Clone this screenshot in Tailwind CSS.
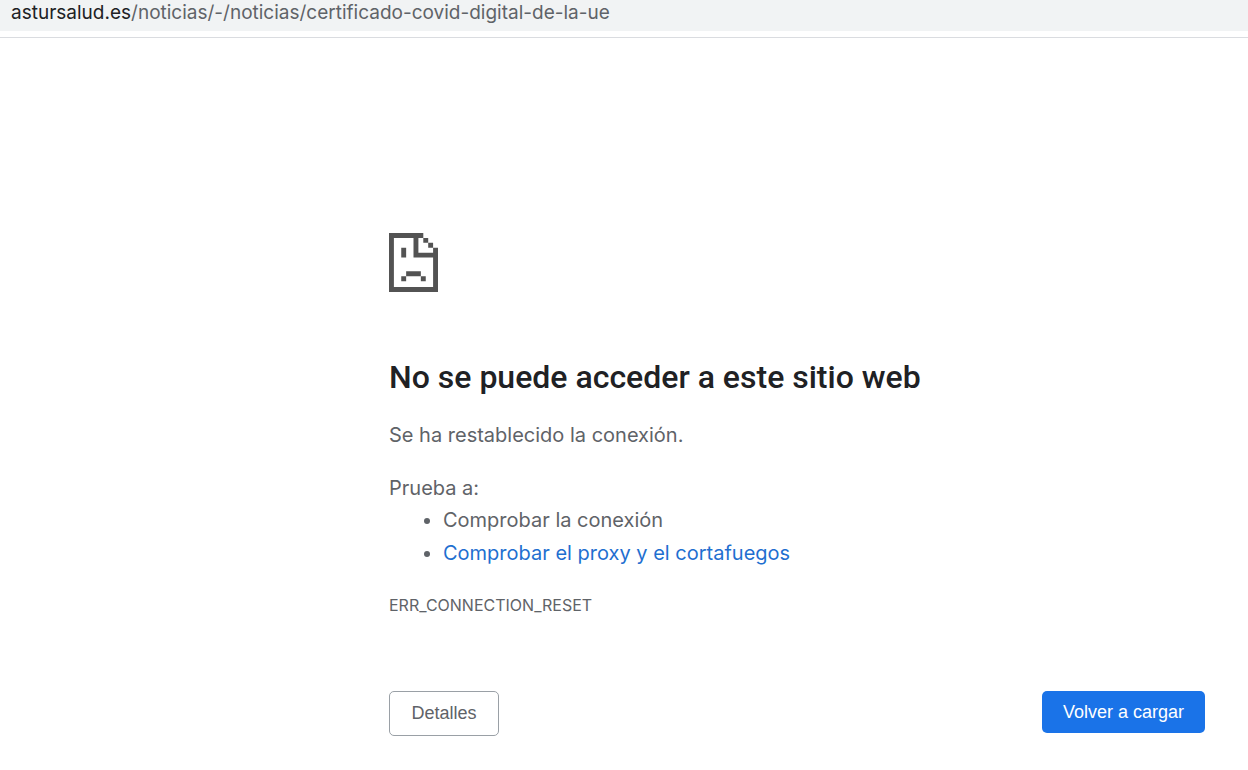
<!DOCTYPE html>
<html lang="es"><head><meta charset="utf-8"><title>astursalud.es</title>
<script src="https://cdn.jsdelivr.net/npm/@tailwindcss/browser@4"></script></head>
<body class="min-h-screen bg-white font-['Inter',sans-serif] text-[#5f6368]">
<header class="h-[38px] border-b border-[#dadce0]"><div class="h-[31px] bg-[#f1f3f4] pl-[11px] text-[19px] leading-[26px]"><span class="text-[#202124]">astursalud.es</span>/noticias/-/noticias/certificado-covid-digital-de-la-ue</div></header>
<main class="ml-[389px] mr-[43px] pt-[195px]">
<svg class="h-[59px] w-[49px]" viewBox="0 0 50 60" preserveAspectRatio="none" fill="#535353" role="img" aria-label="Error"><path d="M0 0H35V5H40V10H45V15H50V60H0ZM5 5V55H45V25H25V5ZM30 5V20H45V15H40V10H35V5ZM12.5 15H17.5V25H12.5ZM17.5 39H32.5V44H17.5ZM12.5 44H17.5V49H12.5ZM32.5 44H37.5V49H32.5Z" fill-rule="evenodd"/></svg>
<h1 class="mt-[65px] font-['Roboto',sans-serif] text-[32px] leading-10 font-medium text-[#202124]">No se puede acceder a este sitio web</h1>
<p class="mt-[22px] text-[20px] leading-8">Se ha restablecido la conexión.</p>
<p class="mt-[21px] text-[20px] leading-8">Prueba a:</p>
<ul class="list-disc pl-[54px] text-[20px] leading-[33px]"><li>Comprobar la conexión</li><li><a href="#" class="text-[#1f6fd0]">Comprobar el proxy y el cortafuegos</a></li></ul>
<p class="mt-[23px] text-[16px] leading-6">ERR_CONNECTION_RESET</p>
<div class="mt-[74px] flex items-start justify-between font-['Liberation_Sans',sans-serif] text-[18px]">
<button class="h-[45px] w-[110px] rounded-[5px] border border-[#9aa0a6]">Detalles</button>
<button class="h-[42px] w-[163px] rounded-[5px] bg-[#1a73e8] text-white">Volver a cargar</button></div>
</main></body></html>
